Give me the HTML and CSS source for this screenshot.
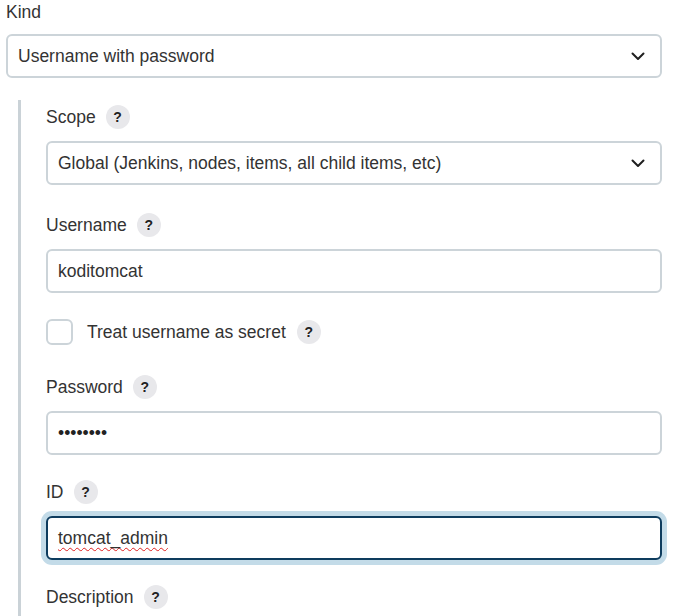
FILE: index.html
```html
<!DOCTYPE html>
<html lang="en">
<head>
<meta charset="utf-8">
<title>Credentials</title>
<link rel="stylesheet" href="styles.css">
</head>
<body>
<div class="form">
  <div class="item">
    <div class="label-row"><span class="label">Kind</span></div>
    <div class="field select">
      <span class="value">Username with password</span>
      <svg class="chevron" viewBox="0 0 16 16" width="16" height="16"><path d="M2.5 5.5 8 11l5.5-5.5" fill="none" stroke="#1f1f1f" stroke-width="2" stroke-linecap="round" stroke-linejoin="round"/></svg>
    </div>
  </div>

  <div class="nested">
    <div class="item">
      <div class="label-row"><span class="label">Scope</span><span class="help">?</span></div>
      <div class="field select">
        <span class="value">Global (Jenkins, nodes, items, all child items, etc)</span>
        <svg class="chevron" viewBox="0 0 16 16" width="16" height="16"><path d="M2.5 5.5 8 11l5.5-5.5" fill="none" stroke="#1f1f1f" stroke-width="2" stroke-linecap="round" stroke-linejoin="round"/></svg>
      </div>
    </div>

    <div class="item item-username">
      <div class="label-row"><span class="label">Username</span><span class="help">?</span></div>
      <div class="field"><span class="value">koditomcat</span></div>
    </div>

    <div class="item check-item">
      <span class="checkbox"></span>
      <span class="label">Treat username as secret</span>
      <span class="help">?</span>
    </div>

    <div class="item item-password">
      <div class="label-row"><span class="label">Password</span><span class="help">?</span></div>
      <div class="field"><span class="value dots">••••••••</span></div>
    </div>

    <div class="item item-id">
      <div class="label-row"><span class="label">ID</span><span class="help">?</span></div>
      <div class="field focused"><span class="value"><span class="misspelled">tomcat_admin</span></span></div>
    </div>

    <div class="item item-desc">
      <div class="label-row"><span class="label">Description</span><span class="help">?</span></div>
    </div>
  </div>
</div>
</body>
</html>
```

FILE: styles.css
```css
html, body {
  margin: 0;
  padding: 0;
  background: #ffffff;
}

body {
  font-family: "Liberation Sans", Arial, sans-serif;
  font-size: 17.5px;
  color: #333333;
  overflow: hidden;
  height: 616px;
}

.form {
  padding: 0 13px 0 6px;
}

.label-row {
  display: flex;
  align-items: center;
  gap: 10px;
  height: 24px;
  margin-bottom: 12px;
}

.form > .item > .label-row {
  margin-bottom: 10px;
}

.label {
  color: #333333;
  line-height: 24px;
}

.help {
  display: inline-flex;
  align-items: center;
  justify-content: center;
  width: 24px;
  height: 24px;
  border-radius: 50%;
  background: #e8e8eb;
  color: #222222;
  font-weight: bold;
  font-size: 14px;
}

.field {
  box-sizing: border-box;
  height: 44px;
  border: 2px solid #ccd4d9;
  border-radius: 6px;
  display: flex;
  align-items: center;
  padding: 0 14px 0 10px;
  background: #ffffff;
}

.value {
  flex: 1;
  color: #333333;
}

.chevron {
  flex: none;
}

.nested {
  display: flex;
  flex-direction: column;
  margin: 22px 0 0 12px;
  border-left: 3px solid #cad2d7;
  padding: 5px 0 0 25px;
  min-height: 600px;
}

.item-username {
  margin-top: 28px;
}

.check-item {
  display: flex;
  align-items: center;
  height: 26px;
  margin-top: 26px;
}

.item-password {
  margin-top: 30px;
}

.item-id {
  margin-top: 25px;
}

.item-desc {
  margin-top: 25px;
}

.checkbox {
  box-sizing: border-box;
  width: 27px;
  height: 26px;
  border: 2px solid #ccd4d9;
  border-radius: 6px;
  margin-right: 14px;
}

.check-item .help {
  margin-left: 11px;
}

.dots {
  color: #222222;
  letter-spacing: 0;
}

.field.focused {
  border-color: #0e3c5e;
  box-shadow: 0 0 0 5px #c3dbe8;
}

.misspelled {
  text-decoration: underline wavy #e02020;
  text-decoration-thickness: 1px;
  text-underline-offset: 3px;
}
```
